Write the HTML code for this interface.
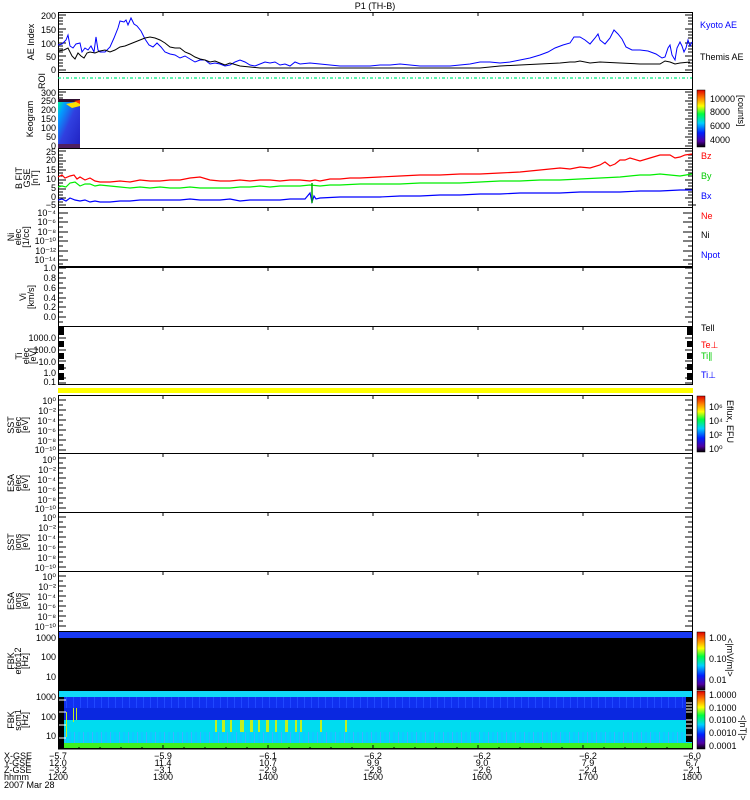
<!DOCTYPE html>
<html><head><meta charset="utf-8"><style>
html,body{margin:0;padding:0;background:#fff;width:750px;height:800px;overflow:hidden}
svg{display:block;font-family:"Liberation Sans",sans-serif}
text{font-size:9px}
</style></head><body>
<svg width="750" height="800" viewBox="0 0 750 800" xmlns="http://www.w3.org/2000/svg">
<defs>
<linearGradient id="rb" x1="0" y1="1" x2="0" y2="0">
<stop offset="0" stop-color="#000"/><stop offset="0.1" stop-color="#5000a0"/><stop offset="0.25" stop-color="#0020ff"/><stop offset="0.42" stop-color="#00d0ff"/><stop offset="0.58" stop-color="#00ff40"/><stop offset="0.72" stop-color="#ffff00"/><stop offset="0.86" stop-color="#ff8000"/><stop offset="1" stop-color="#e00000"/>
</linearGradient>
<linearGradient id="keg" x1="0" y1="0" x2="1" y2="1">
<stop offset="0" stop-color="#00ff80"/><stop offset="0.2" stop-color="#00a0ff"/><stop offset="0.5" stop-color="#3040e0"/><stop offset="1" stop-color="#2020c0"/>
</linearGradient>
<pattern id="stripe" width="9" height="12" patternUnits="userSpaceOnUse"><rect width="9" height="12" fill="#00d8f8"/><rect x="2" width="1" height="12" fill="#40b0ff"/><rect x="6" width="2" height="12" fill="#10c8ff"/></pattern>
<pattern id="stripe2" width="7" height="12" patternUnits="userSpaceOnUse"><rect width="7" height="12" fill="#1030f0"/><rect x="3" width="1" height="12" fill="#2048ff"/></pattern>
</defs>
<text x="375" y="9" text-anchor="middle" font-size="10">P1 (TH-B)</text>

<g fill="none" stroke="#000" stroke-width="1">
<rect x="58.5" y="12.5" width="634" height="60"/>
<rect x="58.5" y="72.5" width="634" height="17"/>
<rect x="58.5" y="89.5" width="634" height="59"/>
<rect x="58.5" y="148.5" width="634" height="59"/>
<rect x="58.5" y="207.5" width="634" height="59"/>
<rect x="58.5" y="267.5" width="634" height="59"/>
<rect x="58.5" y="326.5" width="634" height="58"/>
<rect x="58.5" y="395.5" width="634" height="58"/>
<rect x="58.5" y="453.5" width="634" height="59"/>
<rect x="58.5" y="512.5" width="634" height="59"/>
<rect x="58.5" y="571.5" width="634" height="60"/>
</g>
<g stroke="#000">
<path d="M163 12v4M268 12v4M373 12v4M478 12v4M583 12v4M163 207v4M268 207v4M373 207v4M478 207v4M583 207v4M163 267v4M268 267v4M373 267v4M478 267v4M583 267v4M163 326v4M268 326v4M373 326v4M478 326v4M583 326v4M163 395v4M268 395v4M373 395v4M478 395v4M583 395v4M163 453v4M268 453v4M373 453v4M478 453v4M583 453v4M163 512v4M268 512v4M373 512v4M478 512v4M583 512v4M163 571v4M268 571v4M373 571v4M478 571v4M583 571v4M163 148v4M268 148v4M373 148v4M478 148v4M583 148v4"/>
</g>
<g stroke="#000" stroke-width="1">
<path d="M58 15h8M58 18h5M58 21h5M58 24h5M58 29h8M58 32h5M58 35h5M58 38h5M58 43h8M58 46h5M58 49h5M58 52h5M58 56h8M58 60h5M58 63h5M58 66h5M58 70h8"/>
<path d="M685 15h8M688 18h5M688 21h5M688 24h5M685 29h8M688 32h5M688 35h5M688 38h5M685 43h8M688 46h5M688 49h5M688 52h5M685 56h8M688 60h5M688 63h5M688 66h5M685 70h8"/>
<path d="M58 92h8M58 95h5M58 98h5M58 101h8M58 104h5M58 107h5M58 110h8M58 113h5M58 116h5M58 119h8M58 122h5M58 125h5M58 128h8M58 131h5M58 134h5M58 137h8M58 140h5M58 143h5M58 146h8"/>
<path d="M685 92h8M688 95h5M688 98h5M685 101h8M688 104h5M688 107h5M685 110h8M688 113h5M688 116h5M685 119h8M688 122h5M688 125h5M685 128h8M688 131h5M688 134h5M685 137h8M688 140h5M688 143h5M685 146h8"/>
<path d="M58 151h8M58 155h5M58 158h5M58 161h8M58 164h5M58 167h5M58 170h8M58 173h5M58 176h5M58 180h8M58 183h5M58 186h5M58 189h8M58 192h5M58 195h5M58 198h8M58 202h5M58 205h8"/>
<path d="M685 151h8M688 155h5M688 158h5M685 161h8M688 164h5M688 167h5M685 170h8M688 173h5M688 176h5M685 180h8M688 183h5M688 186h5M685 189h8M688 192h5M688 195h5M685 198h8M688 202h5M688 205h8"/>
<path d="M58 213h10M58 222h10M58 232h10M58 241h10M58 251h10M58 260h10M58 218h5M58 227h5M58 237h5M58 246h5M58 256h5M58 264h5"/>
<path d="M683 213h10M683 222h10M683 232h10M683 241h10M683 251h10M683 260h10M688 218h5M688 227h5M688 237h5M688 246h5M688 256h5M688 264h5"/>
<path d="M58 268h8M58 278h8M58 288h8M58 298h8M58 307h8M58 317h8M58 273h5M58 283h5M58 293h5M58 302h5M58 312h5M58 322h5"/>
<path d="M685 268h8M685 278h8M685 288h8M685 298h8M685 307h8M685 317h8M688 273h5M688 283h5M688 293h5M688 302h5M688 312h5M688 322h5"/>
<path d="M58 400h8M58 410h8M58 420h8M58 430h8M58 440h8M58 450h8M58 405h5M58 415h5M58 425h5M58 435h5M58 445h5"/>
<path d="M685 400h8M685 410h8M685 420h8M685 430h8M685 440h8M685 450h8M688 405h5M688 415h5M688 425h5M688 435h5M688 445h5"/>
<path d="M58 458h8M58 468h8M58 478h8M58 488h8M58 498h8M58 508h8M58 463h5M58 473h5M58 483h5M58 493h5M58 503h5"/>
<path d="M685 458h8M685 468h8M685 478h8M685 488h8M685 498h8M685 508h8M688 463h5M688 473h5M688 483h5M688 493h5M688 503h5"/>
<path d="M58 517h8M58 527h8M58 537h8M58 547h8M58 557h8M58 567h8M58 522h5M58 532h5M58 542h5M58 552h5M58 562h5"/>
<path d="M685 517h8M685 527h8M685 537h8M685 547h8M685 557h8M685 567h8M688 522h5M688 532h5M688 542h5M688 552h5M688 562h5"/>
<path d="M58 576h8M58 586h8M58 596h8M58 606h8M58 616h8M58 626h8M58 581h5M58 591h5M58 601h5M58 611h5M58 621h5"/>
<path d="M685 576h8M685 586h8M685 596h8M685 606h8M685 616h8M685 626h8M688 581h5M688 591h5M688 601h5M688 611h5M688 621h5"/>
</g>
<g fill="#000">
<rect x="58" y="327" width="6" height="8"/><rect x="58" y="341" width="6" height="6"/><rect x="58" y="353" width="6" height="6"/><rect x="58" y="364" width="6" height="6"/><rect x="58" y="373" width="6" height="7"/>
<rect x="687" y="327" width="6" height="8"/><rect x="687" y="341" width="6" height="6"/><rect x="687" y="353" width="6" height="6"/><rect x="687" y="364" width="6" height="6"/><rect x="687" y="373" width="6" height="7"/>
</g>
<path d="M58 338h8M58 350h8M58 361h8M58 368h8M58 378h8M58 383h8M685 338h8M685 350h8M685 361h8M685 368h8M685 378h8M685 383h8" stroke="#000"/>
<rect x="58" y="388" width="635" height="5" fill="#ffff00"/>

<polyline fill="none" stroke="#0000ff" stroke-width="1" points="58,45 62,44 66,40 68,35 70,46 73,48 76,44 80,43 82,52 85,48 88,50 91,46 94,52 96,37 98,50 100,52 105,52 110,47 114,38 118,28 120,21 124,22 126,20 128,25 131,18 134,24 137,26 141,31 145,39 149,45 153,47 157,43 161,47 165,52 170,54 175,55 180,58 185,56 190,59 195,62 200,60 205,60 210,64 215,63 220,64 225,66 230,65 235,62 240,60 245,62 250,65 255,66 260,64 265,62 270,63 275,62 280,65 285,64 290,66 295,62 300,64 310,63 320,64 330,65 340,66 350,66 360,66 370,66 380,65 390,65 400,64 410,65 420,66 430,66 440,66 450,66 460,65 470,64 480,62 490,62 500,63 510,62 520,60 530,58 540,55 548,52 555,48 563,45 570,43 574,37 580,37 585,40 590,44 595,38 598,34 600,40 605,44 610,38 614,30 618,34 622,39 626,47 632,50 640,50 648,51 656,54 662,58 665,57 668,48 670,45 672,55 675,60 677,48 680,42 682,46 684,52 686,48 688,40 690,46 692,42"/>
<polyline fill="none" stroke="#000" stroke-width="1" points="58,51 64,50 68,48 72,56 75,59 78,53 81,56 84,58 87,53 90,52 95,53 100,51 105,50 110,52 115,50 120,47 125,46 130,44 135,42 140,40 145,38 150,37 155,38 160,40 165,43 170,47 175,48 180,48 185,52 190,54 195,57 200,59 205,60 210,62 215,61 220,63 225,65 230,63 240,66 250,67 260,68 280,68 300,68 320,68 340,68 360,68 380,68 400,68 420,68 440,68 460,68 480,68 500,66 520,65 540,64 560,63 570,62 575,62 580,61 590,63 600,62 620,63 640,64 660,64 665,61 670,62 675,64 680,63 690,62"/>

<line x1="58" y1="78" x2="692" y2="78" stroke="#00ee80" stroke-width="1.2" stroke-dasharray="3,2,1,2"/>

<rect x="58" y="99" width="22" height="49" fill="url(#keg)"/>
<rect x="58" y="99" width="22" height="3" fill="#301030"/>
<path d="M66 104 L80 101 L80 106 L72 108Z" fill="#ffe000"/>
<path d="M74 101 L80 100 L80 104Z" fill="#ff3000"/>
<rect x="58" y="144" width="22" height="4" fill="#502060"/>

<polyline fill="none" stroke="#ff0000" stroke-width="1.2" points="58,177 62,175 65,178 70,176 74,175 77,179 80,177 85,180 90,178 95,181 100,182 110,182 120,181 130,182 140,180 150,181 160,181 170,180 180,180 190,178 200,177 210,180 220,181 230,181 240,180 250,181 260,180 270,180 280,181 290,180 300,180 310,181 315,180 320,181 330,179 340,179 350,178 360,178 380,177 400,176 420,175 440,175 460,174 480,174 500,173 520,172 540,170 560,168 570,169 580,167 590,168 600,165 605,162 610,166 615,164 620,160 625,160 630,158 640,161 650,158 660,155 670,155 675,158 680,157 685,155 692,154"/>
<polyline fill="none" stroke="#00ee00" stroke-width="1.2" points="58,187 62,186 66,187 70,183 75,182 80,186 85,184 90,184 95,186 100,185 110,186 120,187 130,188 140,187 150,188 160,187 170,188 180,188 190,187 200,188 210,188 220,188 230,188 240,187 250,187 260,186 270,187 280,186 300,186 310,185 320,186 330,185 340,185 360,184 380,184 400,184 420,183 440,183 460,183 480,182 500,181 520,181 540,180 560,180 580,179 600,178 620,177 640,175 650,175 660,174 670,175 680,176 692,174"/>
<polyline fill="none" stroke="#0000ff" stroke-width="1.2" points="58,200 62,199 66,201 70,198 75,200 80,201 85,200 90,202 95,201 100,202 110,202 120,201 130,201 140,200 150,200 160,200 170,200 180,200 190,199 200,200 210,200 220,200 230,199 240,201 250,200 260,200 270,200 280,200 290,199 300,199 305,199 310,193 312,202 314,196 316,199 320,198 340,197 360,197 380,197 400,196 420,196 440,195 460,195 480,194 500,194 520,193 540,193 560,193 580,192 600,192 620,192 640,191 660,191 680,190 692,190"/>
<path d="M312 183v20" stroke="#0a0" stroke-width="1.5"/>

<rect x="58" y="631" width="635" height="7" fill="#1838f0"/>
<rect x="58" y="638" width="635" height="54" fill="#000"/>
<rect x="58" y="691" width="635" height="6" fill="#10d8f8"/>
<rect x="58" y="697" width="635" height="11" fill="url(#stripe2)"/>
<rect x="58" y="708" width="635" height="12" fill="#0a28e0"/>
<rect x="58" y="720" width="635" height="12" fill="#00dcf0"/>
<rect x="58" y="732" width="635" height="11" fill="url(#stripe)"/>
<rect x="58" y="743" width="635" height="6" fill="#40f020"/>
<g fill="#c0f020">
<rect x="66" y="712" width="1" height="25"/><rect x="73" y="708" width="1" height="14"/><rect x="76" y="708" width="1" height="12"/>
<rect x="215" y="720" width="2" height="12"/><rect x="222" y="720" width="3" height="12"/><rect x="230" y="720" width="2" height="12"/><rect x="240" y="720" width="4" height="12"/><rect x="250" y="720" width="3" height="12"/><rect x="258" y="720" width="2" height="12"/><rect x="266" y="720" width="3" height="12"/><rect x="275" y="720" width="2" height="12"/><rect x="285" y="720" width="3" height="12"/><rect x="295" y="720" width="2" height="12"/><rect x="300" y="720" width="2" height="12"/><rect x="320" y="720" width="2" height="12"/><rect x="345" y="720" width="2" height="12"/>
</g>
<rect x="58" y="697" width="6" height="52" fill="#000"/>
<rect x="686" y="697" width="7" height="45" fill="#000"/>
<path d="M58 700h8M58 712h8M58 725h8M58 738h8" stroke="#fff"/>
<path d="M686 703h6M686 706h6M686 709h6M686 712h6M686 720h6M686 724h6M686 728h6M686 735h6" stroke="#fff"/>
<rect x="58.5" y="631.5" width="634" height="117" fill="none" stroke="#000"/>
<path d="M58 749h635" stroke="#000"/>
<path d="M163 749v-4M268 749v-4M373 749v-4M478 749v-4M583 749v-4M79 749v-2M100 749v-2M121 749v-2M142 749v-2M184 749v-2M205 749v-2M226 749v-2M247 749v-2M289 749v-2M310 749v-2M331 749v-2M352 749v-2M394 749v-2M415 749v-2M436 749v-2M457 749v-2M499 749v-2M520 749v-2M541 749v-2M562 749v-2M604 749v-2M625 749v-2M646 749v-2M667 749v-2" stroke="#000"/>

<rect x="697" y="90" width="8" height="57" fill="url(#rb)" stroke="#000" stroke-width="0.5"/>
<rect x="697" y="396" width="8" height="56" fill="url(#rb)" stroke="#000" stroke-width="0.5"/>
<rect x="697" y="632" width="8" height="58" fill="url(#rb)" stroke="#000" stroke-width="0.5"/>
<rect x="697" y="691" width="8" height="58" fill="url(#rb)" stroke="#000" stroke-width="0.5"/>

<g font-size="8.5">
<text x="700" y="28" fill="#0000ff">Kyoto AE</text>
<text x="700" y="60" fill="#000">Themis AE</text>
<text x="710" y="102">10000</text><text x="710" y="115">8000</text><text x="710" y="129">6000</text><text x="710" y="143">4000</text>
<text transform="translate(738,95) rotate(90)">[counts]</text>
<text x="701" y="159" fill="#ff0000">Bz</text>
<text x="701" y="179" fill="#00cc00">By</text>
<text x="701" y="199" fill="#0000ff">Bx</text>
<text x="701" y="219" fill="#ff0000">Ne</text>
<text x="701" y="238" fill="#000">Ni</text>
<text x="701" y="258" fill="#0000ff">Npot</text>
<text x="701" y="331" fill="#000">Tell</text>
<text x="701" y="348" fill="#ff0000">Te⊥</text>
<text x="701" y="359" fill="#00cc00">Ti∥</text>
<text x="701" y="378" fill="#0000ff">Ti⊥</text>
<text x="709" y="410">10⁶</text><text x="709" y="424">10⁴</text><text x="709" y="438">10²</text><text x="709" y="452">10⁰</text>
<text transform="translate(727,400) rotate(90)">Eflux, EFU</text>
<text x="709" y="641">1.00</text><text x="709" y="662">0.10</text><text x="709" y="683">0.01</text>
<text transform="translate(727,638) rotate(90)">&lt;|mV/m|&gt;</text>
<text x="709" y="698">1.0000</text><text x="709" y="711">0.1000</text><text x="709" y="723">0.0100</text><text x="709" y="736">0.0010</text><text x="709" y="749">0.0001</text>
<text transform="translate(740,715) rotate(90)">&lt;|nT|&gt;</text>
</g>

<g font-size="8.5" text-anchor="end">
<text x="56" y="19">200</text><text x="56" y="33">150</text><text x="56" y="47">100</text><text x="56" y="60">50</text><text x="56" y="73">0</text>
<text x="56" y="96">300</text><text x="56" y="104">250</text><text x="56" y="113">200</text><text x="56" y="122">150</text><text x="56" y="131">100</text><text x="56" y="140">50</text><text x="56" y="149">0</text>
<text x="56" y="155">25</text><text x="56" y="163">20</text><text x="56" y="173">15</text><text x="56" y="182">10</text><text x="56" y="191">5</text><text x="56" y="200">0</text><text x="56" y="208">−5</text>
<text x="56" y="216">10⁻⁴</text><text x="56" y="225">10⁻⁶</text><text x="56" y="235">10⁻⁸</text><text x="56" y="244">10⁻¹⁰</text><text x="56" y="254">10⁻¹²</text><text x="56" y="263">10⁻¹⁴</text>
<text x="56" y="271">1.0</text><text x="56" y="281">0.8</text><text x="56" y="291">0.6</text><text x="56" y="301">0.4</text><text x="56" y="310">0.2</text><text x="56" y="320">0.0</text>
<text x="56" y="341">1000.0</text><text x="56" y="353">100.0</text><text x="56" y="365">10.0</text><text x="56" y="376">1.0</text><text x="56" y="385">0.1</text>
<text x="56" y="404">10⁰</text><text x="56" y="414">10⁻²</text><text x="56" y="424">10⁻⁴</text><text x="56" y="434">10⁻⁶</text><text x="56" y="444">10⁻⁸</text><text x="56" y="453">10⁻¹⁰</text>
<text x="56" y="463">10⁰</text><text x="56" y="473">10⁻²</text><text x="56" y="483">10⁻⁴</text><text x="56" y="493">10⁻⁶</text><text x="56" y="503">10⁻⁸</text><text x="56" y="512">10⁻¹⁰</text>
<text x="56" y="521">10⁰</text><text x="56" y="531">10⁻²</text><text x="56" y="541">10⁻⁴</text><text x="56" y="551">10⁻⁶</text><text x="56" y="561">10⁻⁸</text><text x="56" y="571">10⁻¹⁰</text>
<text x="56" y="580">10⁰</text><text x="56" y="590">10⁻²</text><text x="56" y="600">10⁻⁴</text><text x="56" y="610">10⁻⁶</text><text x="56" y="620">10⁻⁸</text><text x="56" y="630">10⁻¹⁰</text>
<text x="56" y="641">1000</text><text x="56" y="660">100</text><text x="56" y="680">10</text>
<text x="56" y="700">1000</text><text x="56" y="720">100</text><text x="56" y="739">10</text>
</g>
<g font-size="8.5" text-anchor="middle">
<text transform="translate(34,42) rotate(-90)">AE Index</text>
<text transform="translate(45,81) rotate(-90)">ROI</text>
<text transform="translate(33,119) rotate(-90)">Keogram</text>
<text transform="translate(22,178) rotate(-90)">B FIT</text><text transform="translate(30,178) rotate(-90)">GSE</text><text transform="translate(38,178) rotate(-90)">[nT]</text>
<text transform="translate(14,237) rotate(-90)">Ni</text><text transform="translate(21,237) rotate(-90)">elec</text><text transform="translate(29,237) rotate(-90)">[1/cc]</text>
<text transform="translate(26,297) rotate(-90)">Vi</text><text transform="translate(34,297) rotate(-90)">[km/s]</text>
<text transform="translate(22,356) rotate(-90)">Ti</text><text transform="translate(29,356) rotate(-90)">elec</text><text transform="translate(36,356) rotate(-90)">[eV]</text>
<text transform="translate(14,425) rotate(-90)">SST</text><text transform="translate(21,425) rotate(-90)">elec</text><text transform="translate(28,425) rotate(-90)">[eV]</text>
<text transform="translate(14,483) rotate(-90)">ESA</text><text transform="translate(21,483) rotate(-90)">elec</text><text transform="translate(28,483) rotate(-90)">[eV]</text>
<text transform="translate(14,542) rotate(-90)">SST</text><text transform="translate(21,542) rotate(-90)">ions</text><text transform="translate(28,542) rotate(-90)">[eV]</text>
<text transform="translate(14,601) rotate(-90)">ESA</text><text transform="translate(21,601) rotate(-90)">ions</text><text transform="translate(28,601) rotate(-90)">[eV]</text>
<text transform="translate(14,661) rotate(-90)">FBK</text><text transform="translate(21,661) rotate(-90)">efdc12</text><text transform="translate(28,661) rotate(-90)">[Hz]</text>
<text transform="translate(14,720) rotate(-90)">FBK</text><text transform="translate(21,720) rotate(-90)">scm1</text><text transform="translate(28,720) rotate(-90)">[Hz]</text>
</g>
<g font-size="8.5">
<text x="4" y="759">X-GSE</text><text x="4" y="766">Y-GSE</text><text x="4" y="773">Z-GSE</text><text x="4" y="780">hhmm</text><text x="4" y="788">2007 Mar 28</text>
</g>
<g font-size="8.5" text-anchor="middle">
<text x="58" y="759">−5.7</text><text x="58" y="766">12.0</text><text x="58" y="773">−3.2</text><text x="58" y="780">1200</text>
<text x="163" y="759">−5.9</text><text x="163" y="766">11.4</text><text x="163" y="773">−3.1</text><text x="163" y="780">1300</text>
<text x="268" y="759">−6.1</text><text x="268" y="766">10.7</text><text x="268" y="773">−2.9</text><text x="268" y="780">1400</text>
<text x="373" y="759">−6.2</text><text x="373" y="766">9.9</text><text x="373" y="773">−2.8</text><text x="373" y="780">1500</text>
<text x="482" y="759">−6.2</text><text x="482" y="766">9.0</text><text x="482" y="773">−2.6</text><text x="482" y="780">1600</text>
<text x="588" y="759">−6.2</text><text x="588" y="766">7.9</text><text x="588" y="773">−2.4</text><text x="588" y="780">1700</text>
<text x="692" y="759">−6.0</text><text x="692" y="766">6.7</text><text x="692" y="773">−2.1</text><text x="692" y="780">1800</text>
</g>
</svg>
</body></html>
